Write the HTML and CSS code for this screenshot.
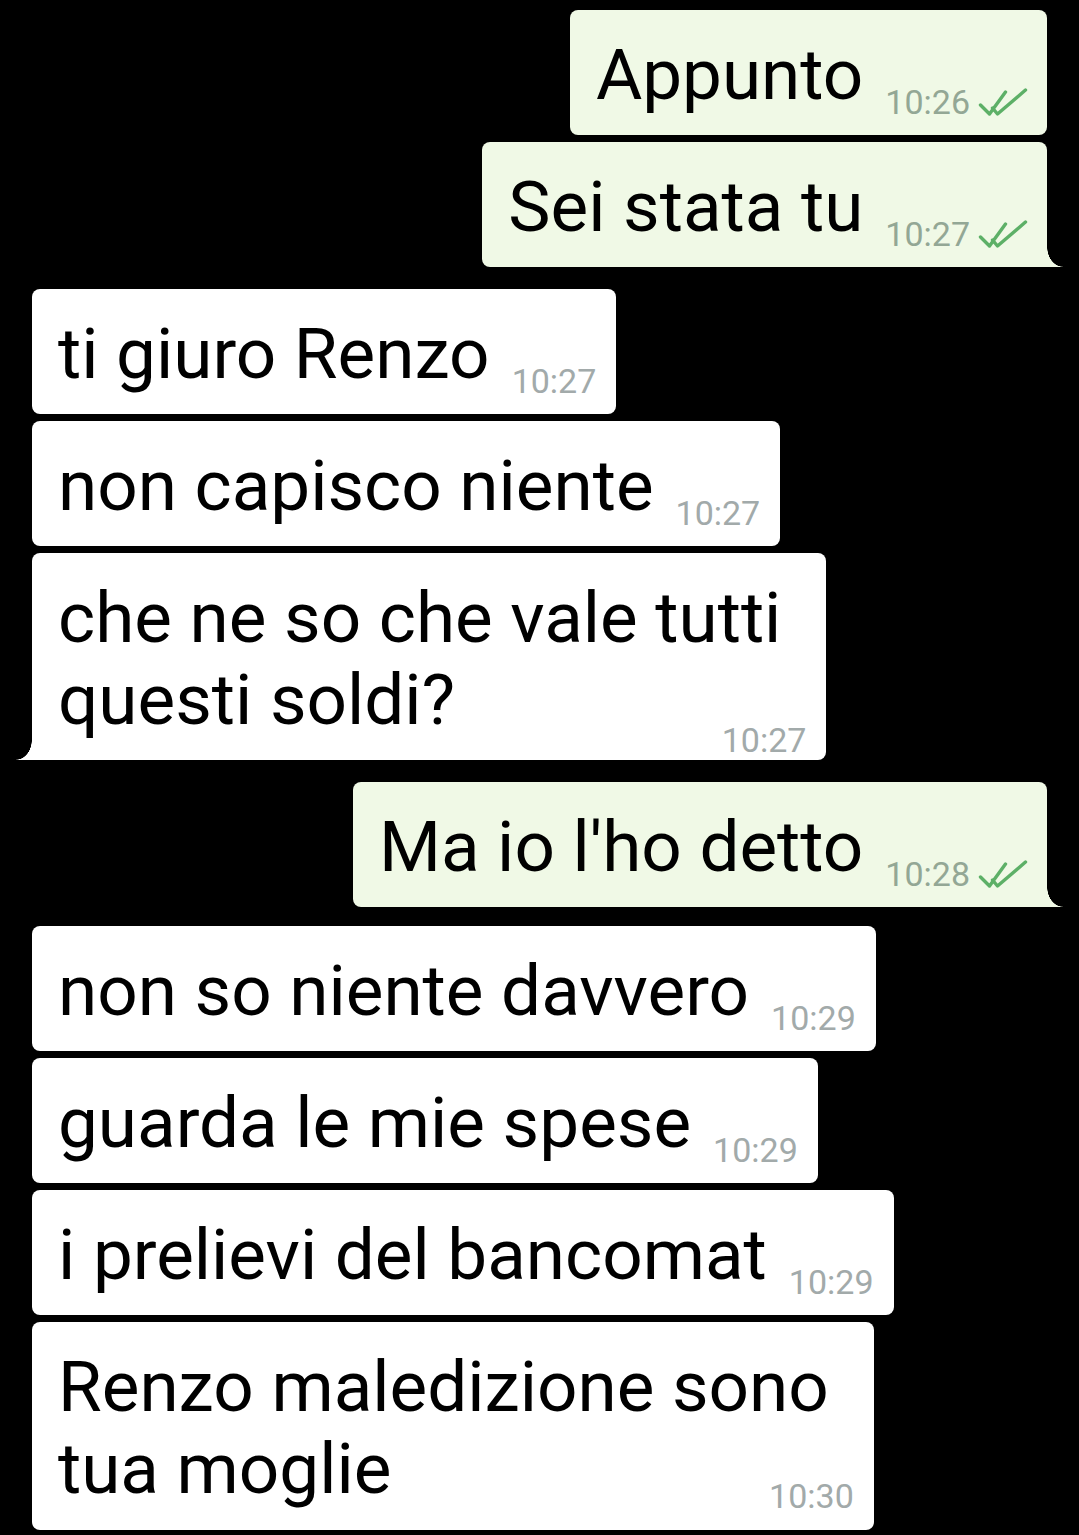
FILE: index.html
```html
<!DOCTYPE HTML>
<html>

<head>
    <title>Chat</title>
    <meta name="viewport" content="width=device-width, initial-scale=1">
    <link rel="stylesheet" href="styles.css">
</head>

<body>
    <div class="chat">
        <div class="msg out">
            <span class="text">Appunto</span><span class="meta">10:26<svg class="ticks" viewBox="0 0 49 28"><path d="M2 17 L11 26 L27 4 M14 20 L19 26 L47 2" /></svg></span>
        </div>
        <div class="msg out tail">
            <span class="text">Sei stata tu</span><span class="meta">10:27<svg class="ticks" viewBox="0 0 49 28"><path d="M2 17 L11 26 L27 4 M14 20 L19 26 L47 2" /></svg></span>
        </div>

        <div class="msg in group">
            <span class="text">ti giuro Renzo</span><span class="meta">10:27</span>
        </div>
        <div class="msg in">
            <span class="text">non capisco niente</span><span class="meta">10:27</span>
        </div>
        <div class="msg in multi tail low">
            <span class="text">che ne so che vale tutti<br>questi soldi?</span><span class="meta">10:27</span>
        </div>

        <div class="msg out tail group">
            <span class="text">Ma io l'ho detto</span><span class="meta">10:28<svg class="ticks" viewBox="0 0 49 28"><path d="M2 17 L11 26 L27 4 M14 20 L19 26 L47 2" /></svg></span>
        </div>

        <div class="msg in group-sm">
            <span class="text">non so niente davvero</span><span class="meta">10:29</span>
        </div>
        <div class="msg in">
            <span class="text">guarda le mie spese</span><span class="meta">10:29</span>
        </div>
        <div class="msg in">
            <span class="text">i prelievi del bancomat</span><span class="meta">10:29</span>
        </div>
        <div class="msg in multi">
            <span class="text">Renzo maledizione sono<br>tua moglie</span><span class="meta">10:30</span>
        </div>
    </div>
</body>

</html>
```

FILE: styles.css
```css
html {
    font-family: Roboto, "Noto Sans", sans-serif;
}

body {
    margin: 0;
    background-color: #000;
}

.chat {
    display: flex;
    flex-direction: column;
    gap: 7px;
    padding: 10px 32px;
}

.msg {
    position: relative;
    padding: 24px 20px 19px 26px;
    border-radius: 8px;
    font-size: 71px;
    line-height: 82px;
    color: #000;
    white-space: nowrap;
}

.msg.out {
    align-self: flex-end;
    background-color: #f0f9e6;
    padding-right: 19px;
}

.msg.in {
    align-self: flex-start;
    background-color: #fff;
}

.group {
    margin-top: 15px;
}

.group-sm {
    margin-top: 12px;
}

.meta {
    display: inline-block;
    margin-left: 22px;
    font-size: 34px;
    line-height: 20px;
    vertical-align: -15px;
}

.out .meta {
    color: #93a795;
}

.in .meta {
    color: #a2aaaa;
}

.ticks {
    width: 50px;
    height: 28px;
    margin-left: 8px;
    vertical-align: -2px;
}

.ticks path {
    fill: none;
    stroke: #5db067;
    stroke-width: 3.4;
    stroke-linecap: round;
    stroke-linejoin: round;
}

/* two-line bubbles: time goes under the text, on the right */
.multi {
    padding-right: 45px;
    padding-bottom: 17px;
}

.multi .meta {
    display: block;
    margin-top: -31px;
    margin-left: 0;
    margin-right: -25px;
    line-height: 34px;
    text-align: right;
    vertical-align: baseline;
}

.multi.low {
    padding-bottom: 3px;
}

.multi.low .meta {
    margin-top: -18px;
}

/* bubble tails */
.out.tail {
    border-bottom-right-radius: 0;
}

.in.tail {
    border-bottom-left-radius: 0;
}

.tail::after {
    content: "";
    position: absolute;
    bottom: 0;
    width: 16px;
    height: 20px;
}

.out.tail::after {
    right: -16px;
    background: radial-gradient(16px 20px at 100% 0, transparent 97%, #f0f9e6 100%);
}

.in.tail::after {
    left: -16px;
    background: radial-gradient(16px 20px at 0 0, transparent 97%, #fff 100%);
}
```
